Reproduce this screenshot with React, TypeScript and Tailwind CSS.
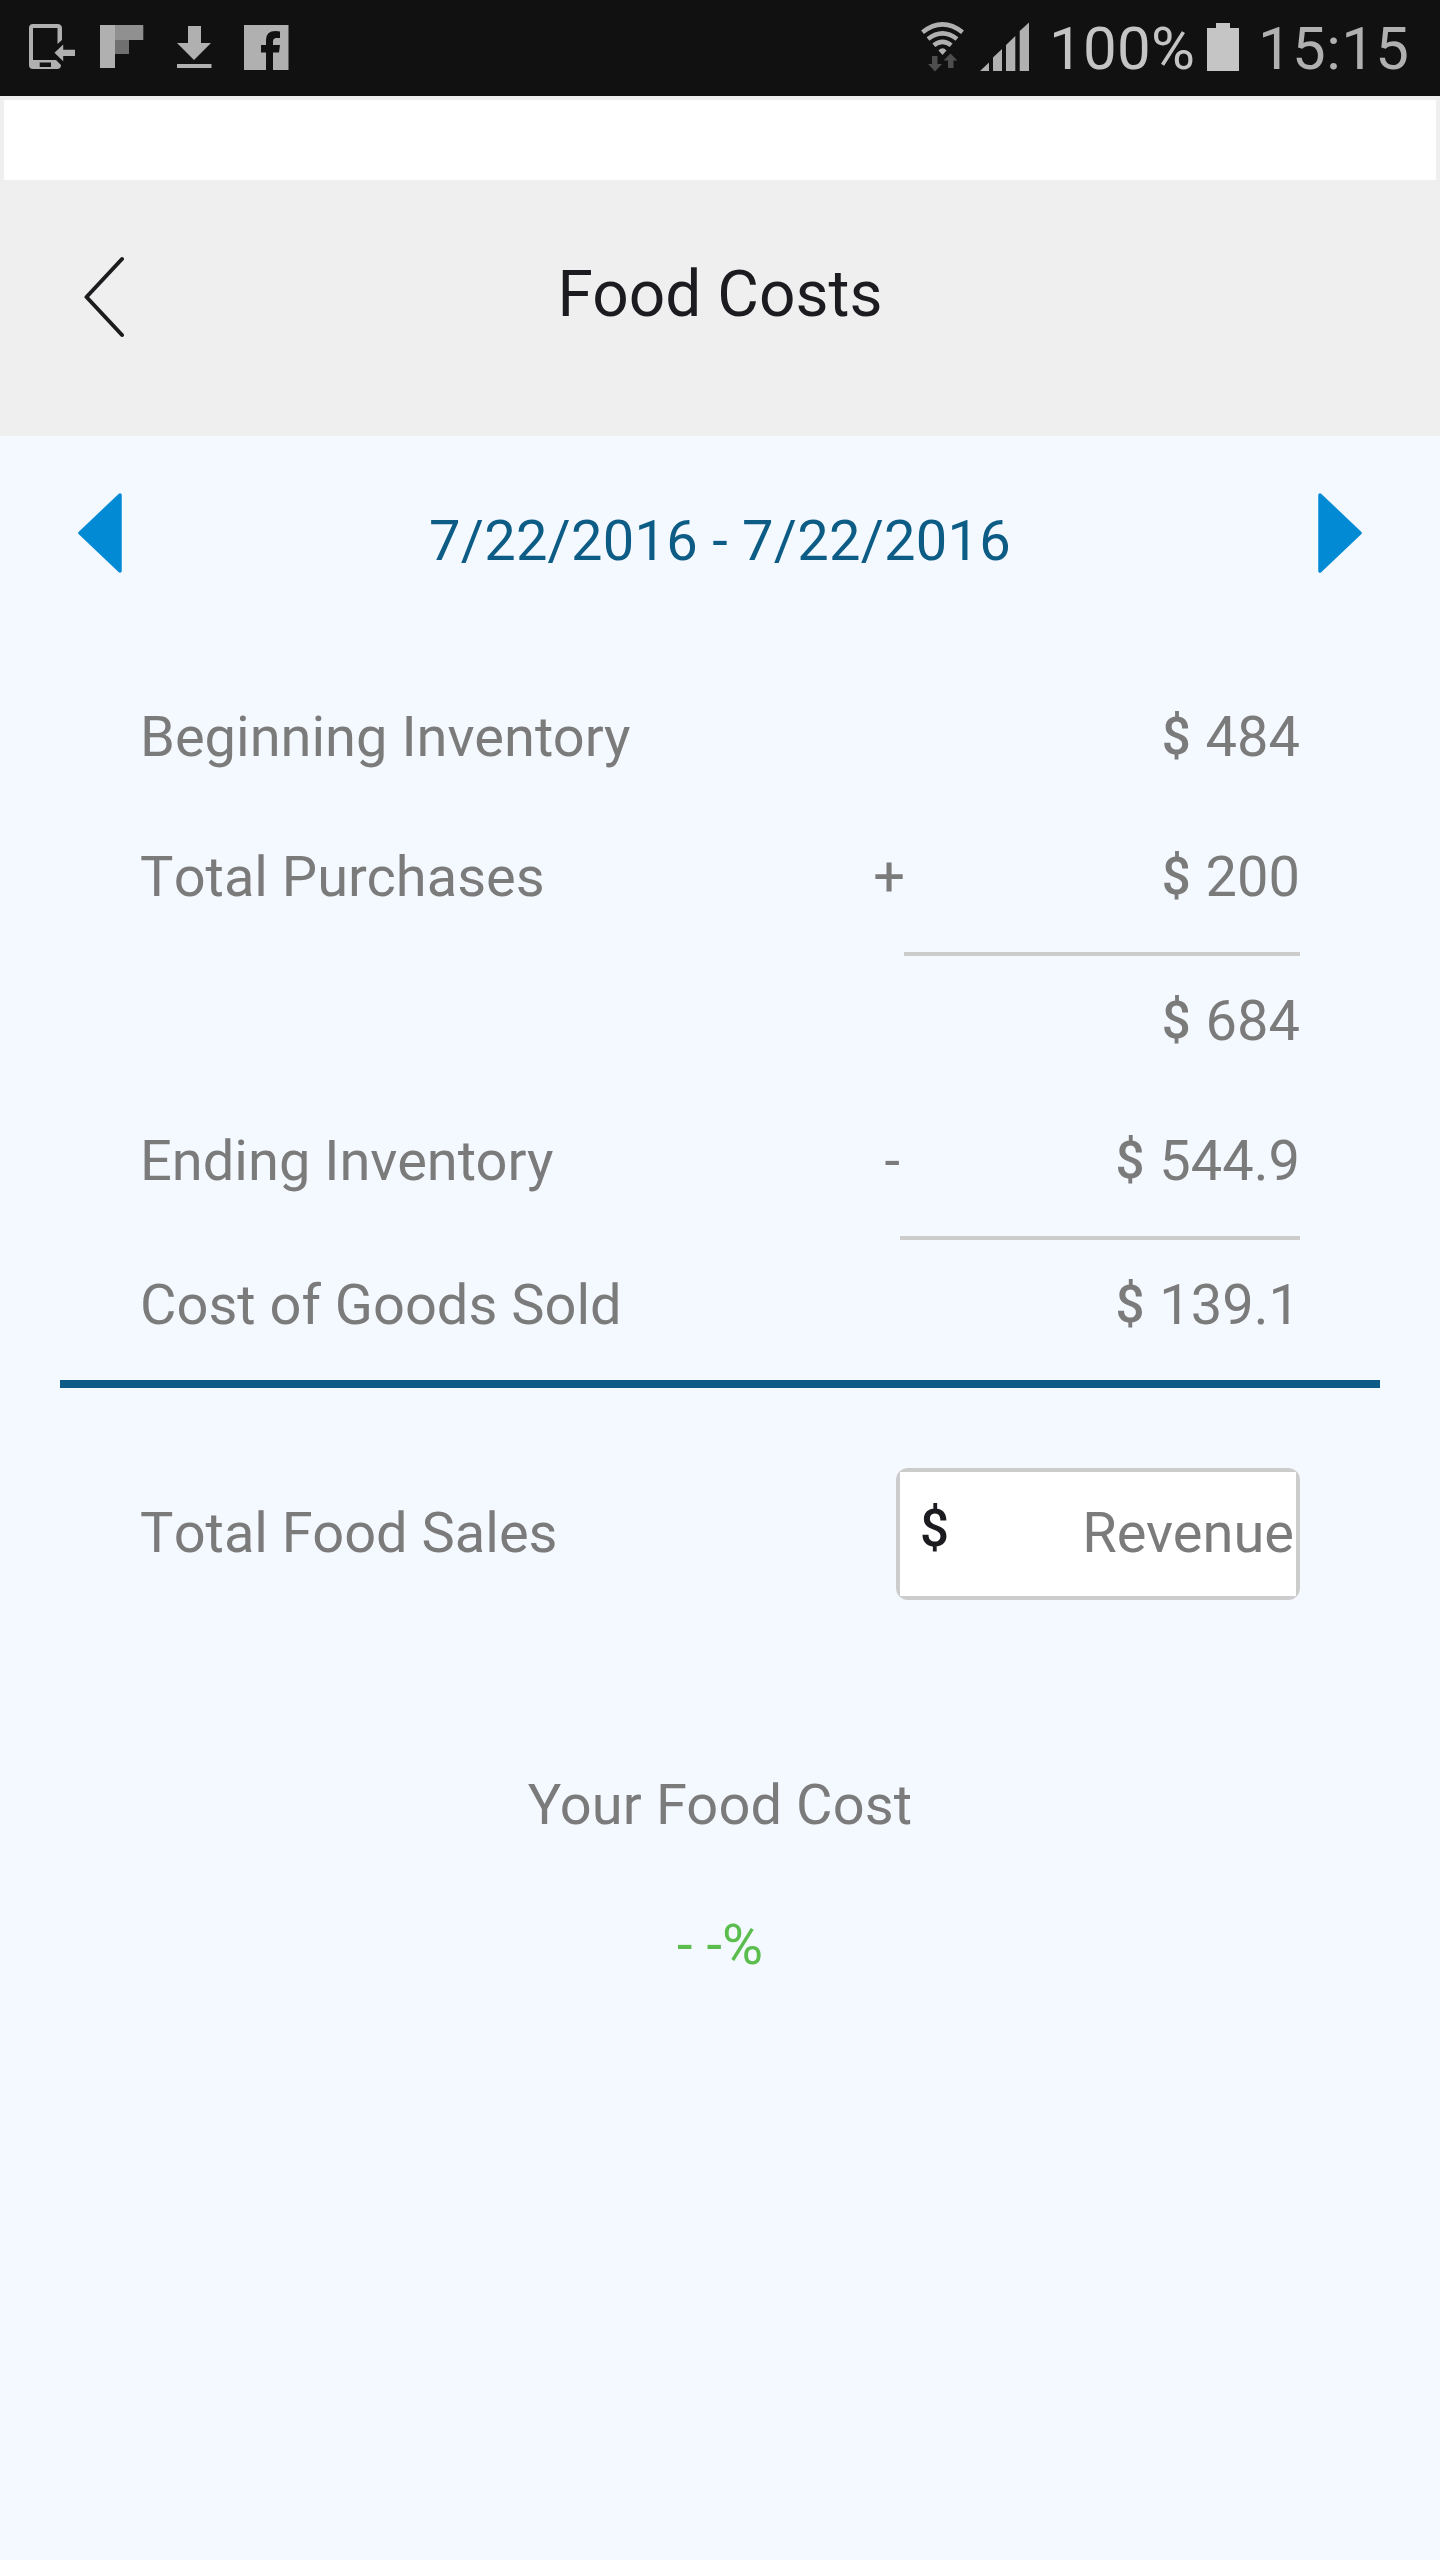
import React from "react";

function StatusBar() {
  return (
    <div className="flex h-24 items-start bg-[#111111] text-[60px] leading-[70px] text-[#b0b0b0]">
      <svg width="300" height="96" viewBox="0 0 300 96" fill="#b0b0b0" className="shrink-0">
        <path
          fillRule="evenodd"
          d="M33 24H57.5Q62 24 62 28.500V40L57.500 44V28H33V60H56L61 65Q61 69 57 69H33Q29 69 29 65V28Q29 24 33 24ZM39.700 62.500V67H51V62.500Z"
        />
        <path d="M54.500 52.800L63.200 44.500V49.700H75V56H63.200V61.300Z" />
        <path d="M100 25H115V68H100Z" />
        <path d="M115 25H143.300V40H115Z" fill="#909090" />
        <path d="M115 40H129V54H115Z" fill="#707070" />
        <path d="M188 26H201V43H211L194 60L177 43H188ZM177 64H211.500V68H177Z" />
        <path d="M244 25H288.500V70H273V52.500H279L280 45H273V41.500Q273 38 276.500 38H280V31.500Q278 31 275.500 31Q266 31 266 40V45H261V52.500H266V70H244Z" />
      </svg>
      <div className="flex-1" />
      <svg width="140" height="96" viewBox="0 0 140 96" fill="#b0b0b0" className="shrink-0">
        <g fill="none" stroke="#b0b0b0" strokeWidth="4.600">
          <path d="M22.500 32.200Q42.500 16.500 62.500 32.200" />
          <path d="M28 39Q42.500 27.800 57 39" />
          <path d="M33.800 45.300Q42.500 38.500 51.200 45.300" />
        </g>
        <path d="M38.500 50.500Q42.500 46 46.500 50.500L42.500 55Z" />
        <path
          d="M32 56H37.500V64H42L35 71.500L28 64H32ZM50.500 53.500L57.500 60.500H53.500V68H48V60.500H43.500Z"
          fill="#4e4e4e"
        />
        <path d="M80 71L89 62.500V71ZM93 71V57.500L102 49V71ZM106 71V45L115.300 36V71ZM119.700 71V31L129 22.500V71Z" />
      </svg>
      <span className="mt-[14px] w-[160px] pl-[9px] tracking-[0.3px] text-[#c4c4c4]">100%</span>
      <svg width="48" height="96" viewBox="0 0 48 96" className="shrink-0">
        <path d="M16 23H30V28H39V71H7V28H16Z" fill="#c5c5c5" />
      </svg>
      <span className="mt-[14px] w-[192px] pl-[10px] tracking-[0.4px]">15:15</span>
    </div>
  );
}

function Arrow({ flip = false }: { flip?: boolean }) {
  return (
    <svg width="44" height="80" viewBox="0 0 44 80" className={flip ? "rotate-180" : ""}>
      <path d="M2 40L42 2V78Z" fill="#028ad4" stroke="#028ad4" strokeWidth="3.500" strokeLinejoin="round" />
    </svg>
  );
}

function Dollar() {
  return <span className="relative -top-[2px] inline-block w-[31px] text-center text-[51px] leading-none font-medium">$</span>;
}

type RowProps = {
  label?: React.ReactNode;
  op?: string;
  value: string;
  row: string;
  cell: string;
};

function Row({ label, op, value, row, cell }: RowProps) {
  return (
    <div className={`flex pr-[140px] pl-[140px] ${row}`}>
      <span className="flex-1">{label}</span>
      <span className={op === "+" ? "-mr-px" : ""}>{op}</span>
      <div className={`text-right ${cell}`}>
        <Dollar /> {value}
      </div>
    </div>
  );
}

function Total({ children }: { children: string }) {
  return (
    <>
      <span className="tracking-[0.2px]">T</span>otal {children}
    </>
  );
}

export default function App() {
  return (
    <div className="flex h-[2560px] w-[1440px] flex-col overflow-hidden bg-[#f4f9ff] font-['Roboto',sans-serif] text-[56px] leading-[76px] whitespace-pre text-[#7b7b7b]">
      <StatusBar />
      <header className="h-[340px] bg-[#efefef] px-1 pt-1">
        <div className="h-20 bg-white" />
        <div className="flex items-start pl-20">
          <svg width="48" height="88" viewBox="0 0 48 88" className="mt-[73px]">
            <path d="M38 6L2.500 44L38 82" fill="none" stroke="#1c1c1e" strokeWidth="4" strokeLinecap="round" strokeLinejoin="round" />
          </svg>
          <h1 className="mt-[75px] flex-1 pr-[128px] text-center text-[64px] leading-[80px] text-[#1c1c20]">Food Costs</h1>
        </div>
      </header>
      <div className="flex h-[232px] items-start justify-between px-[78px] pt-[57px]">
        <Arrow />
        <span className="mt-[10px] tracking-[0.27px] text-[#0c5c86]">7/22/2016 - 7/22/2016</span>
        <Arrow flip />
      </div>
      <Row label="Beginning Inventory" value="484" row="h-[140px] pt-[31px]" cell="w-[396px]" />
      <Row label={<Total>Purchases</Total>} op="+" value="200" row="h-[148px] pt-[31px]" cell="w-[396px] border-b-4 border-[#cccccc]" />
      <Row value="684" row="h-[136px] pt-[27px]" cell="w-[396px]" />
      <Row label="Ending Inventory" op="-" value="544.9" row="h-[148px] pt-[31px]" cell="w-[400px] border-b-4 border-[#cccccc]" />
      <Row label="Cost of Goods Sold" value="139.1" row="h-[140px] pt-[27px]" cell="w-[400px]" />
      <div className="mx-[60px] h-2 bg-[#0c5c86]" />
      <div className="flex items-start justify-between px-[140px] pt-20">
        <span className="mt-[27px]">
          <Total>Food Sales</Total>
        </span>
        <div className="h-[132px] w-[404px] overflow-hidden rounded-[12px] bg-[#cccccc] p-1">
          <div className="flex h-full items-start justify-between bg-white pr-[2px] pl-[19px]">
            <span className="mt-[19px] text-[#1c1c20]">
              <Dollar />
            </span>
            <span className="mt-[23px]">Revenue</span>
          </div>
        </div>
      </div>
      <p className="mt-[167px] text-center tracking-[0.1px]">Your Food Cost</p>
      <p className="mt-[64px] text-center text-[#5bbd4e]">- -%</p>
    </div>
  );
}
